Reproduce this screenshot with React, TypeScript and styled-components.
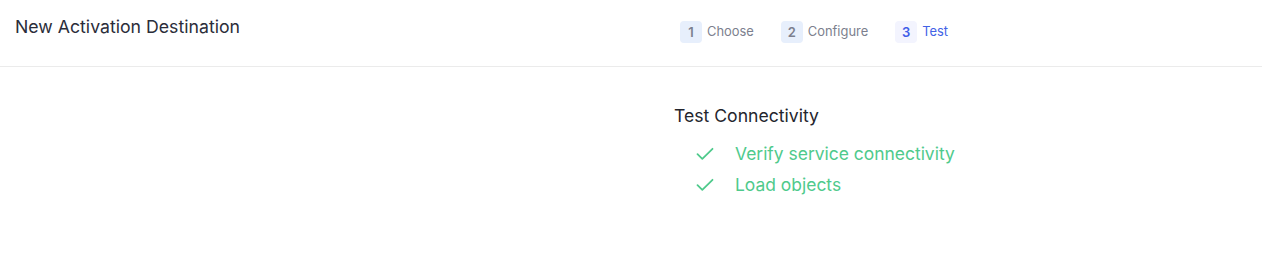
import React from "react";
import styled, { createGlobalStyle } from "styled-components";

const Global = createGlobalStyle`
  html, body { margin: 0; padding: 0; background: #ffffff; }
  body { font-family: Inter, "Noto Sans", sans-serif; }
`;

const Page = styled.div`
  width: 1262px;
  height: 265px;
  background: #fff;
`;

const Header = styled.header`
  height: 66px;
  border-bottom: 1px solid #ebebeb;
  display: grid;
  grid-template-columns: 665px 1fr;
  box-sizing: content-box;
`;

const Title = styled.h1`
  margin: 0;
  padding: 15px 0 0 15px;
  font-size: 17.7px;
  font-weight: 400;
  line-height: 24px;
  color: #2b2d3a;
`;

const Steps = styled.ol`
  list-style: none;
  margin: 0;
  padding: 20px 0 0 15px;
  display: flex;
  align-items: flex-start;
  gap: 27px;
`;

const Step = styled.li<{ $active?: boolean }>`
  display: flex;
  align-items: center;
  gap: 5px;
  font-size: 12.9px;
  line-height: 22px;
  padding-top: 1px;
  color: ${(p) => (p.$active ? "#4262e6" : "#7c7f8e")};
`;

const Badge = styled.span<{ $active?: boolean }>`
  width: 22px;
  height: 22px;
  margin-top: -1px;
  border-radius: 4px;
  display: flex;
  align-items: center;
  justify-content: center;
  font-size: 13px;
  font-weight: 600;
  background: ${(p) => (p.$active ? "#f3f4fe" : "#e7effc")};
  color: ${(p) => (p.$active ? "#3d5ce8" : "#7c7f8e")};
`;

const Body = styled.main`
  padding: 37px 0 0 674px;
`;

const SectionTitle = styled.h2`
  margin: 0;
  font-size: 17.6px;
  font-weight: 400;
  line-height: 24px;
  color: #24252d;
`;

const Checks = styled.ul`
  list-style: none;
  margin: 0;
  padding: 13px 0 0 22px;
  display: flex;
  flex-direction: column;
  gap: 6px;
`;

const Check = styled.li`
  display: flex;
  align-items: center;
  gap: 21px;
  font-size: 17.45px;
  line-height: 25px;
  color: #4fca8c;
`;

const CheckIcon = () => (
  <svg width="18" height="14" viewBox="0 0 18 14" fill="none">
    <path d="M1.5 7.2 L6.3 11.8 L16.5 1.8" stroke="#4fca8c" strokeWidth="1.8" strokeLinecap="round" strokeLinejoin="round" />
  </svg>
);

export default function App() {
  return (
    <Page>
      <Global />
      <Header>
        <Title>New Activation Destination</Title>
        <Steps>
          <Step>
            <Badge>1</Badge>Choose
          </Step>
          <Step>
            <Badge>2</Badge>Configure
          </Step>
          <Step $active>
            <Badge $active>3</Badge>Test
          </Step>
        </Steps>
      </Header>
      <Body>
        <SectionTitle>Test Connectivity</SectionTitle>
        <Checks>
          <Check>
            <CheckIcon />
            Verify service connectivity
          </Check>
          <Check>
            <CheckIcon />
            Load objects
          </Check>
        </Checks>
      </Body>
    </Page>
  );
}
